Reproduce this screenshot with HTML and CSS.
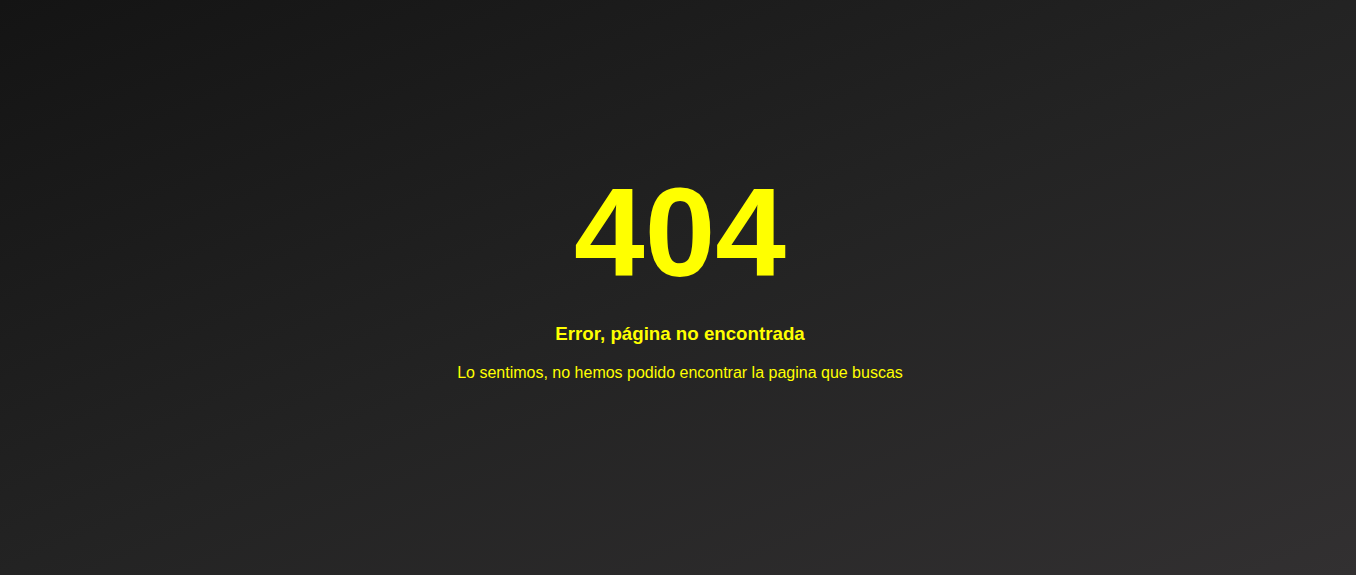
FILE: index.html
```html
<!DOCTYPE html>
<html lang="es">
<head>
<meta charset="utf-8">
<title>404</title>
<link rel="stylesheet" href="styles.css">
</head>
<body>
<main class="page">
  <div class="error">
    <h1 class="error__code">404</h1>
    <h3 class="error__title">Error, página no encontrada</h3>
    <p class="error__text">Lo sentimos, no hemos podido encontrar la pagina que buscas</p>
  </div>
</main>
</body>
</html>
```
FILE: styles.css
```css
html, body {
  margin: 0;
  padding: 0;
  background: #ffffff;
  height: 100%;
}
body {
  font-family: "Liberation Sans", Arial, sans-serif;
  overflow: hidden;
}
.page {
  width: calc(100% - 11px);
  height: 100%;
  box-sizing: border-box;
  padding: 0 0 34px 4px;
  background: linear-gradient(to bottom right, #141414 0%, #232323 50%, #323031 100%);
  display: flex;
  align-items: center;
  justify-content: center;
}
.error {
  display: flex;
  flex-direction: column;
  align-items: center;
  color: #ffff00;
  text-align: center;
}
.error__code {
  margin: 0;
  font-size: 127px;
  font-weight: 700;
}
.error__title {
  margin: 18px 0 0;
  font-size: 18.72px;
  font-weight: 700;
}
.error__text {
  margin: 19px 0 0;
  font-size: 16px;
  font-weight: 400;
}
```
